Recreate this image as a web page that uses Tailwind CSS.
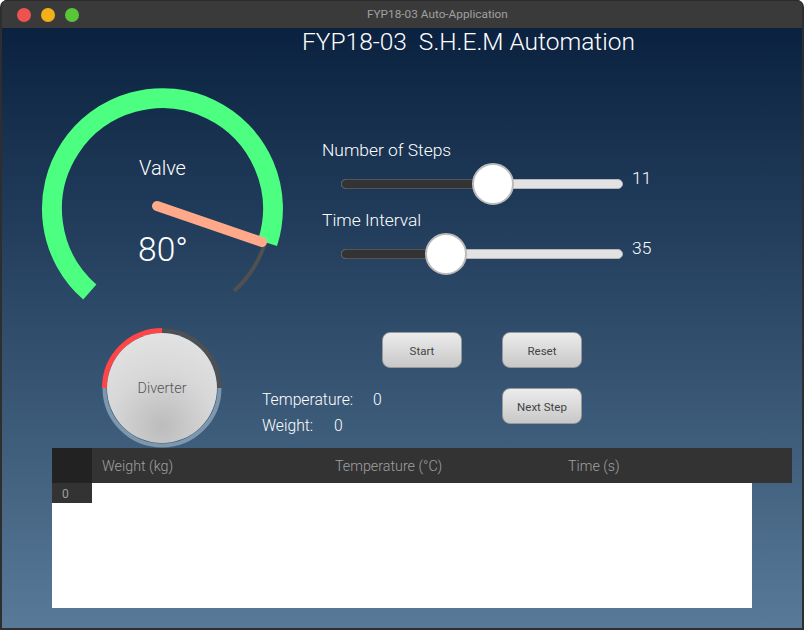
<!DOCTYPE html>
<html lang="en">
<head>
  <meta charset="UTF-8" />
  <title>FYP18-03 Auto-Application</title>
  <script src="https://cdn.jsdelivr.net/npm/@tailwindcss/browser@4"></script>
</head>
<body class="bg-white font-['Roboto',sans-serif]">
  <div class="w-[804px] h-[630px] flex flex-col overflow-hidden rounded-t-[7px] border-2 border-t-0 border-[#2e2e2e] bg-[#2e2e2e]">

    <!-- title bar -->
    <div class="h-7 shrink-0 -mx-[2px] flex items-center bg-[#3a3a3a] border-t border-[#2a2a2a] relative">
      <div class="flex gap-[10px] pl-[17px]">
        <span class="w-[14px] h-[14px] rounded-full bg-[#ee5350]"></span>
        <span class="w-[14px] h-[14px] rounded-full bg-[#f5b019]"></span>
        <span class="w-[14px] h-[14px] rounded-full bg-[#5ac536]"></span>
      </div>
      <p class="ml-[288px] text-[11.8px] text-[#a0a0a0]">FYP18-03 Auto-Application</p>
    </div>

    <!-- main -->
    <div class="w-[800px] h-[600px] bg-gradient-to-b from-[#0a2240] to-[#587a98]">
      <h1 class="h-[27px] leading-[27px] pl-[300px] text-[24.5px] font-light text-white whitespace-pre">FYP18-03  S.H.E.M Automation</h1>

      <div class="flex mt-[23px] pl-[30px] h-[230px]">
        <svg class="w-[260px] h-[230px] shrink-0" viewBox="32 78 260 230" fill="none">
          <path d="M89.8 292 A110.5 110.5 0 1 1 267.5 243" stroke="#4cff80" stroke-width="20" />
          <path d="M265 243 A110 110 0 0 1 234 291" stroke="#505050" stroke-width="4" />
          <line x1="157" y1="206" x2="262" y2="242" stroke="#ffa98a" stroke-width="10" stroke-linecap="round" />
          <text x="162.5" y="175" text-anchor="middle" font-size="20" font-weight="300" fill="#fff" font-family="Roboto">Valve</text>
          <text x="163" y="261" text-anchor="middle" font-size="33.5" font-weight="300" fill="#fff" font-family="Roboto">80°</text>
        </svg>

        <div class="ml-[30px] pt-[62px] text-white font-light text-[17.4px]">
          <p class="h-5 leading-5">Number of Steps</p>
          <div class="mt-[3px] h-[42px] pl-[19px] flex items-center">
            <div class="relative w-[282px] h-[10px] rounded-full bg-[#e3e3e3] border border-[#b5b5b5]">
              <div class="-m-px w-[152px] h-[10px] rounded-l-full bg-[#333] border border-[#555]"></div>
              <span class="absolute left-[130px] -top-[17px] w-[42px] h-[42px] rounded-full bg-white border-2 border-[#bbb]"></span>
            </div>
            <span class="ml-[9px] pb-[11px]">11</span>
          </div>
          <p class="mt-[5px] h-5 leading-5">Time Interval</p>
          <div class="mt-[3px] h-[42px] pl-[19px] flex items-center">
            <div class="relative w-[282px] h-[10px] rounded-full bg-[#e3e3e3] border border-[#b5b5b5]">
              <div class="-m-px w-[105px] h-[10px] rounded-l-full bg-[#333] border border-[#555]"></div>
              <span class="absolute left-[83px] -top-[17px] w-[42px] h-[42px] rounded-full bg-white border-2 border-[#bbb]"></span>
            </div>
            <span class="ml-[9px] pb-[11px]">35</span>
          </div>
        </div>
      </div>

      <div class="flex mt-[20px] pl-[100px] h-[120px]">
        <div class="relative w-[120px] h-[120px] shrink-0 flex items-center justify-center">
          <svg class="absolute inset-0 w-[120px] h-[120px]" viewBox="0 0 120 120" fill="none">
            <path d="M2.5 60 A57.5 57.5 0 0 0 117.5 60" stroke="#7e97ad" stroke-width="4" />
            <path d="M60 2.5 A57.5 57.5 0 0 1 117.5 60" stroke="#505050" stroke-width="4" />
            <path d="M2.5 60 A57.5 57.5 0 0 1 60 2.5" stroke="#ff4545" stroke-width="5" />
          </svg>
          <div class="relative w-[110px] h-[110px] pt-[2px] rounded-full bg-[radial-gradient(circle_at_50%_85%,#bcbcbc,#d8d8d8_50%,#e6e6e6)] flex items-center justify-center text-[14.4px] font-light text-[#555]">Diverter</div>
        </div>

        <div class="ml-[40px] w-[120px] pt-[62px] text-white font-light text-[15.7px]">
          <div class="flex h-5 leading-5">
            <span class="w-[111px]">Temperature:</span><span>0</span>
          </div>
          <div class="flex mt-[6px] h-5 leading-5">
            <span class="w-[72px]">Weight:</span><span>0</span>
          </div>
        </div>

        <div class="grid grid-cols-[80px_80px] grid-rows-[36px_36px] gap-x-[40px] gap-y-[20px] pt-[4px] text-[11.5px] text-[#444]">
          <button class="rounded-lg border border-[#999] pt-[3px] bg-gradient-to-b from-[#ececec] to-[#c8c8c8]">Start</button>
          <button class="rounded-lg border border-[#999] pt-[3px] bg-gradient-to-b from-[#ececec] to-[#c8c8c8]">Reset</button>
          <span></span>
          <button class="rounded-lg border border-[#999] pt-[3px] bg-gradient-to-b from-[#ececec] to-[#c8c8c8]">Next Step</button>
        </div>
      </div>

      <!-- table -->
      <div class="ml-[50px] w-[740px] h-[35px] flex bg-[#333] text-[14.3px] font-light text-[#a0a0a0] leading-[37px]">
        <div class="w-10 bg-[#222]"></div>
        <div class="w-[233px] pl-[10px]">Weight (kg)</div>
        <div class="w-[233px] pl-[10px]">Temperature (°C)</div>
        <div class="w-[233px] pl-[10px]">Time (s)</div>
      </div>
      <div class="ml-[50px] w-[700px] h-[125px] bg-white">
        <div class="w-10 h-5 bg-[#333] text-[12px] text-[#a0a0a0] leading-[22px] pl-[10px]">0</div>
      </div>
    </div>
  </div>
</body>
</html>
